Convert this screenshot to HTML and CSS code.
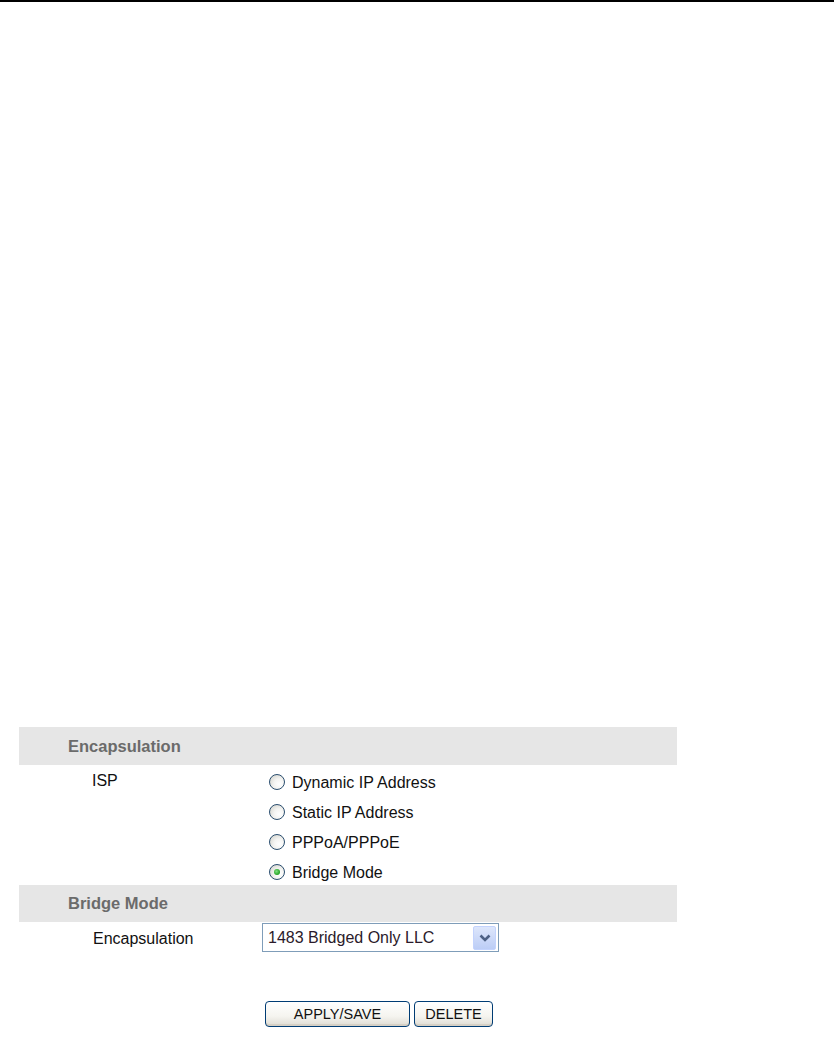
FILE: index.html
```html
<!DOCTYPE html>
<html>
<head>
<meta charset="utf-8">
<link rel="stylesheet" href="styles.css">
</head>
<body>
<div class="topline"></div>
<div class="page">
  <div class="form">
    <div class="band">Encapsulation</div>
    <div class="row isp">
      <div class="label">ISP</div>
      <div class="options">
        <div class="opt"><span class="radio"></span><span>Dynamic IP Address</span></div>
        <div class="opt"><span class="radio"></span><span>Static IP Address</span></div>
        <div class="opt"><span class="radio"></span><span>PPPoA/PPPoE</span></div>
        <div class="opt"><span class="radio checked"></span><span>Bridge Mode</span></div>
      </div>
    </div>
    <div class="band">Bridge Mode</div>
    <div class="row enc">
      <div class="label">Encapsulation</div>
      <div class="select">
        <span class="select-text">1483 Bridged Only LLC</span>
        <span class="select-btn">
          <svg width="14" height="10" viewBox="0 0 14 10"><path d="M2.5 2.5 L7 7 L11.5 2.5" fill="none" stroke="#4d6185" stroke-width="2.6"/></svg>
        </span>
      </div>
    </div>
    <div class="actions">
      <button class="btn apply">APPLY/SAVE</button>
      <button class="btn del">DELETE</button>
    </div>
  </div>
</div>
</body>
</html>
```
FILE: styles.css
```css
html, body {
  margin: 0;
  padding: 0;
  background: #fff;
}
body {
  font-family: "Liberation Sans", Arial, sans-serif;
  font-size: 16px;
  color: #111;
}
.topline {
  height: 2px;
  width: 834px;
  background: #000;
}
.page {
  padding-top: 725px;
}
.form {
  margin-left: 19px;
  width: 658px;
}
.band {
  height: 37px;
  line-height: 37px;
  background: #e6e6e6;
  padding-left: 49px;
  font-weight: bold;
  font-size: 16.5px;
  color: #6b6b6b;
}
.band:first-child {
  height: 38px;
  line-height: 38px;
}
.row {
  display: flex;
}
.label {
  width: 176px;
  padding-left: 73px;
  flex: none;
}
.isp .label {
  line-height: 30px;
  padding-top: 1px;
}
.options {
  display: flex;
  flex-direction: column;
}
.opt {
  height: 30px;
  display: flex;
  align-items: center;
  gap: 7px;
  padding-left: 1px;
  padding-top: 5px;
  box-sizing: border-box;
}
.radio {
  width: 14px;
  height: 14px;
  border: 1px solid #2a4d6e;
  border-radius: 50%;
  background: radial-gradient(circle at 65% 65%, #ffffff 0%, #f4f4f2 40%, #d3d3cc 90%);
  flex: none;
  position: relative;
  margin-top: -2px;
}
.radio.checked::after {
  content: "";
  position: absolute;
  left: 4px;
  top: 4px;
  width: 6px;
  height: 6px;
  border-radius: 50%;
  background: radial-gradient(circle at 40% 40%, #7fe07f 0%, #21a121 70%);
}
.enc {
  padding-top: 1px;
  height: 34px;
}
.enc .label {
  width: 169px;
  padding-left: 74px;
  line-height: 31px;
}
.select {
  width: 235px;
  height: 27px;
  border: 1px solid #7f9db9;
  display: flex;
  align-items: center;
  justify-content: space-between;
  background: #fff;
}
.select-text {
  padding-left: 5px;
  color: #2a1a2a;
}
.select-btn {
  width: 23px;
  height: 24px;
  margin-right: 2px;
  border-radius: 2px;
  background: linear-gradient(#dde6fb, #bccdf6);
  border: 1px solid #c3d3fd;
  box-sizing: border-box;
  display: flex;
  align-items: center;
  justify-content: center;
}
.actions {
  display: flex;
  gap: 4px;
  padding-left: 246px;
  padding-top: 44px;
}
.btn {
  font-family: "Liberation Sans", Arial, sans-serif;
  font-size: 14.5px;
  color: #111;
  height: 26px;
  border: 1px solid #003c74;
  border-radius: 4px;
  background: linear-gradient(#ffffff 0%, #f5f4ef 60%, #dedcd3 100%);
  padding: 0;
  box-shadow: inset 0 -2px 0 #d6d0c5;
}
.apply {
  width: 145px;
}
.del {
  width: 79px;
}
```
